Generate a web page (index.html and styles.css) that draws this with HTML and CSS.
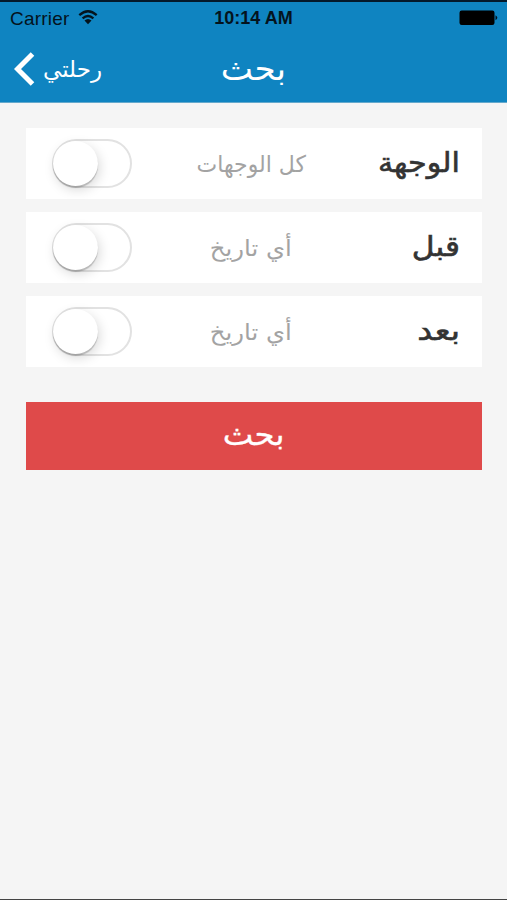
FILE: index.html
```html
<!DOCTYPE html>
<html lang="ar">
<head>
<meta charset="utf-8">
<title>بحث</title>
<link rel="stylesheet" href="styles.css">
</head>
<body>
<div class="screen">
  <header class="header">
    <div class="status">
      <div class="carrier">
        <span>Carrier</span>
        <svg class="wifi" viewBox="0 0 20 15" width="20" height="15">
          <path d="M1.300 5.200Q10-2.600 18.700 5.200M4.600 8.400Q10 3.600 15.400 8.400" fill="none" stroke="#04131d" stroke-width="2.300"/>
          <path d="M6.500 10.600Q10 7.600 13.500 10.600L10 14.200Z" fill="#04131d"/>
        </svg>
      </div>
      <span class="time">10:14 AM</span>
      <svg class="battery" viewBox="0 0 40 16" width="40" height="16">
        <rect x="0.500" y="0.500" width="35" height="14.500" rx="2.200" fill="#000"/>
        <path d="M36.500 5.200Q40.200 7.700 36.500 10.200Z" fill="#04131d"/>
      </svg>
    </div>
    <nav class="nav">
      <a class="back">
        <svg viewBox="0 0 22 34" width="22" height="34"><path d="M18.500 2L3.500 17L18.500 32" fill="none" stroke="#fff" stroke-width="5"/></svg>
        <span class="back-text" dir="rtl">رحلتي</span>
      </a>
      <h1 class="title" dir="rtl">بحث</h1>
    </nav>
  </header>
  <main class="content">
    <div class="row">
      <span class="toggle"><span class="knob"></span></span>
      <span class="value" dir="rtl">كل الوجهات</span>
      <span class="label" dir="rtl">الوجهة</span>
    </div>
    <div class="row">
      <span class="toggle"><span class="knob"></span></span>
      <span class="value value-date" dir="rtl">أي تاريخ</span>
      <span class="label label-short" dir="rtl">قبل</span>
    </div>
    <div class="row">
      <span class="toggle"><span class="knob"></span></span>
      <span class="value value-date" dir="rtl">أي تاريخ</span>
      <span class="label label-wide" dir="rtl">بعد</span>
    </div>
    <button class="submit" dir="rtl"><span class="submit-text">بحث</span></button>
  </main>
</div>
</body>
</html>
```
FILE: styles.css
```css
* { box-sizing: border-box; }
body { margin: 0; background: #f5f5f5; font-family: "DejaVu Sans", sans-serif; }
.screen { height: 900px; border-bottom: 1px solid #444; overflow: hidden; }
.header { height: 103px; background: #0f84c1; border-top: 2px solid #04192b; border-bottom: 1px solid #65a9cc; }
.status {
  display: grid; grid-template-columns: 1fr auto 1fr; align-items: center;
  height: 32px; padding: 1px 8px 0 10px;
  font-family: "Liberation Sans", sans-serif; font-size: 19px; color: #04131d;
}
.carrier { display: flex; align-items: center; gap: 9px; letter-spacing: 0.2px; }
.wifi { margin-top: -2px; }
.time { font-weight: bold; font-size: 18px; margin-right: 2px; }
.battery { justify-self: end; margin-top: -1px; }
.nav { display: grid; grid-template-columns: 1fr auto 1fr; align-items: center; height: 68px; color: #fff; }
.back { display: flex; align-items: center; gap: 7px; padding: 1px 0 0 14px; }
.back-text { font-size: 23px; white-space: nowrap; }
.title { margin: 2px 0 0; font-size: 32px; font-weight: normal; transform: scaleX(1.070); }
.content { padding: 25px 25.500px 0 26px; }
.row {
  display: grid; grid-template-columns: 80px 1fr 90px; align-items: center;
  height: 71px; margin-bottom: 13px; padding: 0 22px 0 26px; background: #fff;
}
.toggle { display: block; width: 80px; height: 49px; border: 2px solid #e2e2e2; border-radius: 25px; }
.knob {
  display: block; width: 45px; height: 45px; margin-left: -1px; border-radius: 50%; background: #fff;
  box-shadow: 0 2px 1px rgba(0,0,0,.2), 2px 4px 12px rgba(0,0,0,.15);
}
.value { justify-self: center; font-size: 23px; color: #a3a3a3; white-space: nowrap; transform: scaleX(.955); }
.value-date { transform: scaleX(1.060); }
.label {
  font-size: 28px; line-height: 36px; padding-bottom: 2px; color: #333;
  -webkit-text-stroke: 0.600px #333; white-space: nowrap;
  transform: scaleX(1.080); transform-origin: right;
}
.label-short { transform: scaleX(1.120); }
.label-wide { transform: scaleX(1.190); }
.submit {
  display: block; width: 100%; height: 67.500px; margin-top: 35px; padding: 0 0 2px; border: 0;
  background: #df4a4a; color: #fff; font: 30px "DejaVu Sans", sans-serif;
  -webkit-text-stroke: 0.300px #fff;
}
.submit-text { display: inline-block; transform: scaleX(1.080); }
```
